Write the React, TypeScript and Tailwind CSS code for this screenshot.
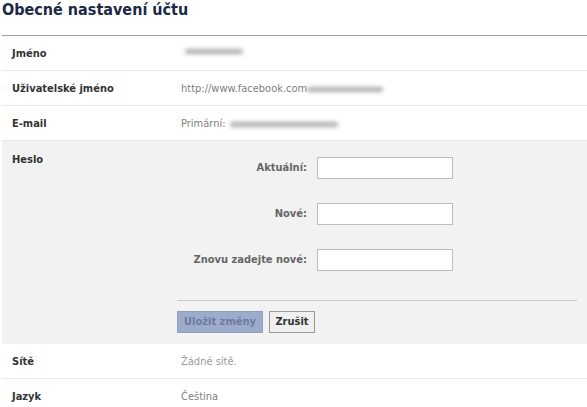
import React from 'react'

const font = { fontFamily: "'DejaVu Sans Condensed', 'Liberation Sans', sans-serif" }

function Smudge({ w, className = '' }: { w: number; className?: string }) {
  return (
    <span
      className={`inline-block h-[5px] rounded-full bg-[#9a9a9a] blur-[2px] opacity-80 align-middle ${className}`}
      style={{ width: w }}
    />
  )
}

function Row({ label, children }: { label: string; children: React.ReactNode }) {
  return (
    <div className="flex items-center h-[35px] pt-[2px] border-b border-[#e9e9e9] pl-[10px]">
      <div className="w-[165px] text-[11px] font-bold text-[#333]">{label}</div>
      <div className="pl-[4px] text-[11px] text-[#808080] flex items-center">{children}</div>
    </div>
  )
}

export default function App() {
  const fields = ['Aktuální:', 'Nové:', 'Znovu zadejte nové:']

  return (
    <div className="w-[587px] h-[407px] overflow-hidden bg-white" style={font}>
      {/* Header */}
      <div className="h-[35px] pl-[2px]">
        <h2 className="text-[16px] leading-[20px] font-bold text-[#1c2a47]">Obecné nastavení účtu</h2>
      </div>
      <div className="ml-[2px] border-t border-[#a0a0a0]">
        <Row label="Jméno">
          <Smudge w={58} className="ml-[4px] -mt-[6px]" />
        </Row>
        <Row label="Uživatelské jméno">
          <span>http://www.facebook.com</span>
          <Smudge w={76} />
        </Row>
        <Row label="E-mail">
          <span>Primární:</span>
          <Smudge w={108} className="ml-[4px]" />
        </Row>

        {/* Password */}
        <div className="flex bg-[#f2f2f2] pl-[10px] pb-[11px]">
          <div className="w-[165px] pt-[11px] text-[11px] font-bold text-[#333]">Heslo</div>
          <div className="flex-1 pr-[10px]">
            <div className="flex flex-col gap-[24px] pt-[16px]">
              {fields.map((f) => (
                <div key={f} className="flex items-center">
                  <div className="w-[130px] text-right text-[11px] font-bold text-[#666]">{f}</div>
                  <input className="ml-[10px] w-[136px] h-[22px] bg-white border border-[#bdbdbd] outline-none" />
                </div>
              ))}
            </div>
            <div className="mt-[29px] border-t border-[#cccccc]" />
            <div className="flex gap-[6px] mt-[10px]">
              <button className="h-[22px] px-[6px] w-[86px] bg-[#9eaccb] border border-[#8f9fc2] text-[11px] font-bold text-[#6a7ba3]">
                Uložit změny
              </button>
              <button className="h-[22px] w-[46px] bg-[#f0f0f0] border border-[#999] text-[11px] font-bold text-[#333]">
                Zrušit
              </button>
            </div>
          </div>
        </div>

        <Row label="Sítě">
          <span className="text-[#999]">Žádné sítě.</span>
        </Row>
        <Row label="Jazyk">
          <span>Čeština</span>
        </Row>
      </div>
    </div>
  )
}
